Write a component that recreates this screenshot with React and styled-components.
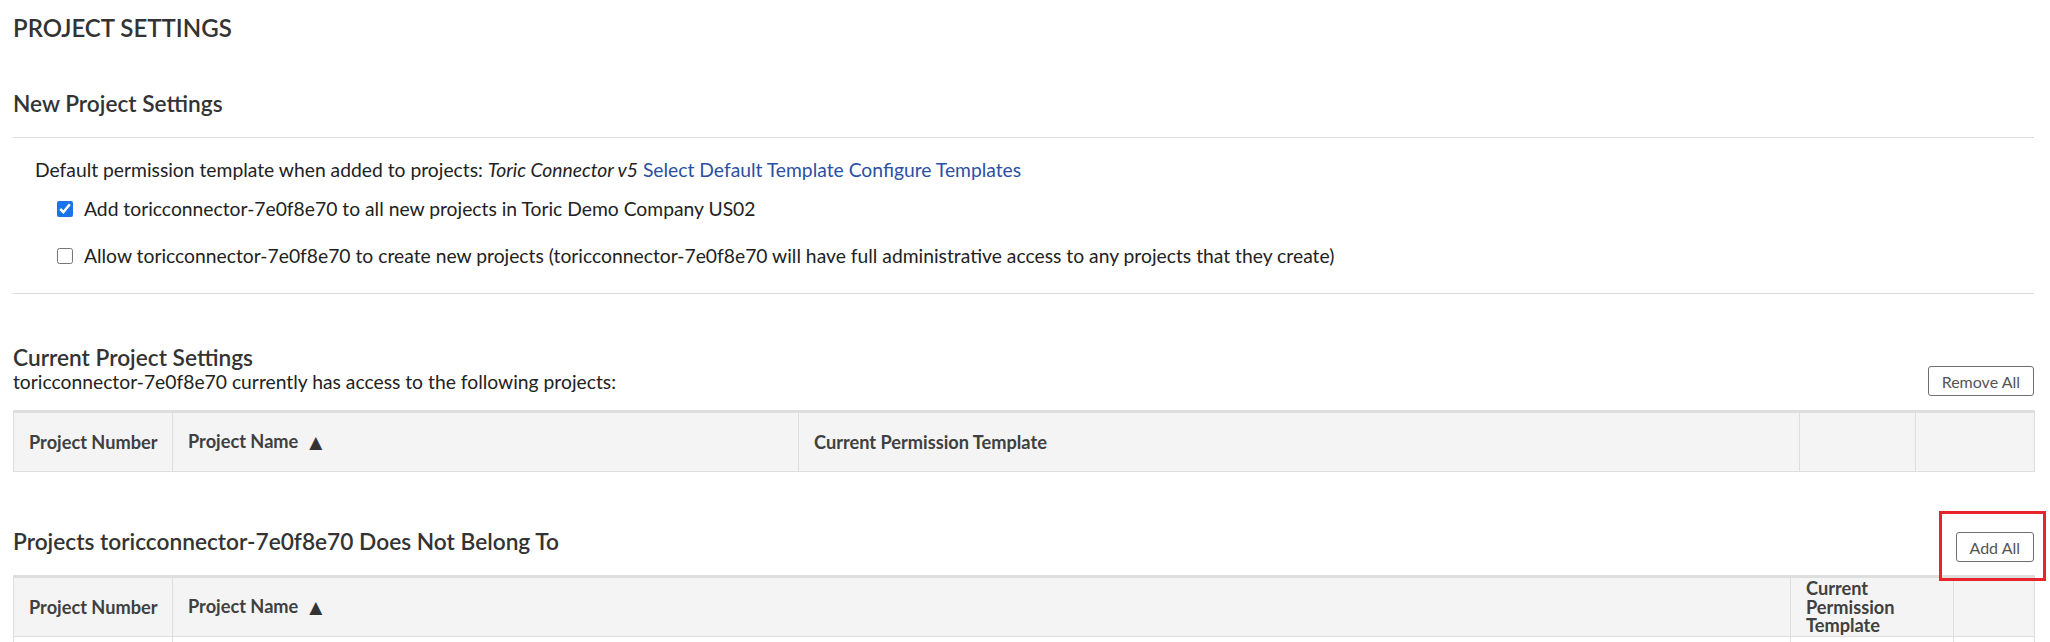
import React from "react";
import styled, { createGlobalStyle } from "styled-components";

const GlobalStyle = createGlobalStyle`
  html, body { margin: 0; padding: 0; background: #fff; }
  body { font-family: Lato, "Open Sans", "Liberation Sans", sans-serif; color: #222; }
  * { box-sizing: border-box; }
`;

const Page = styled.div`
  padding: 0 16px 0 13px;
  width: 2050px;
`;

const PageTitle = styled.h1`
  margin: 0;
  padding-top: 13px;
  font-size: 24px;
  line-height: 29px;
  font-weight: 600;
  color: #333;
`;

const SectionTitle = styled.h2`
  margin: 0;
  font-size: 22.7px;
  line-height: 27px;
  font-weight: 600;
  color: #333;
`;

const NewTitle = styled(SectionTitle)`
  margin-top: 48px;
`;

const Divider = styled.hr`
  border: 0;
  border-top: 1px solid #dcdcdc;
  height: 0;
  margin: ${(p) => p.$top}px 0 0;
`;

const Body = styled.div`
  padding: 20px 0 0 22px;
  font-size: 19.3px;
  line-height: 24px;
`;

const Italic = styled.em`
  font-style: italic;
`;

const Link = styled.a`
  color: #2b4fa3;
  text-decoration: none;
  cursor: pointer;
`;

const CheckRow = styled.label`
  display: flex;
  align-items: center;
  gap: 11px;
  padding-left: 44px;
  margin-top: ${(p) => p.$top}px;
  font-size: 19.3px;
  line-height: 24px;
  color: #222;
`;

const Check = styled.input`
  width: 16px;
  height: 16px;
  margin: 0;
  flex: none;
  accent-color: #1a73e8;
`;

const HeaderRow = styled.div`
  display: flex;
  justify-content: space-between;
  align-items: flex-start;
  margin-top: ${(p) => p.$top}px;
`;

const SubText = styled.div`
  font-size: 19.3px;
  line-height: 22px;
  color: #222;
`;

const Button = styled.button`
  font-family: inherit;
  font-size: 16px;
  color: #555;
  background: #fff;
  border: 1px solid #6f6f6f;
  border-radius: 3px;
  height: 30px;
  padding: 0 13px;
  cursor: pointer;
`;

const ButtonSlot = styled.div`
  position: relative;
  margin-top: ${(p) => p.$top}px;
`;

const Highlight = styled(ButtonSlot)`
  &::after {
    content: "";
    position: absolute;
    top: -21px;
    bottom: -19px;
    left: -17px;
    right: -12px;
    border: 3px solid #e8232b;
    pointer-events: none;
  }
`;

const Table = styled.table`
  width: 100%;
  border-collapse: collapse;
  table-layout: fixed;
  margin-top: ${(p) => p.$top}px;
  border-top: 3px solid #dedede;
`;

const Th = styled.th`
  background: #f4f4f4;
  border: 1px solid #dedede;
  border-top: 0;
  height: 60px;
  padding: 0 8px 0 15px;
  text-align: left;
  vertical-align: middle;
  font-size: 18.2px;
  line-height: 18.5px;
  font-weight: 700;
  color: #404040;
`;

const Td = styled.td`
  border: 1px solid #dedede;
  height: 40px;
  padding: 0 15px;
`;

const Arrow = styled.span`
  font-family: "DejaVu Sans", sans-serif;
  font-size: 17px;
  margin-left: 11px;
  color: #333;
`;

const table1Cols = [159, 626, 1001, 116, 119];
const table2Cols = [159, 1618, 163, 81];

export default function App() {
  return (
    <>
      <GlobalStyle />
      <Page>
        <PageTitle>PROJECT SETTINGS</PageTitle>
        <NewTitle>New Project Settings</NewTitle>
        <Divider $top={20} />
        <Body>
          Default permission template when added to projects:{" "}
          <Italic>Toric Connector v5</Italic> <Link>Select Default Template</Link>{" "}
          <Link>Configure Templates</Link>
        </Body>
        <CheckRow $top={15}>
          <Check type="checkbox" defaultChecked />
          Add toricconnector-7e0f8e70 to all new projects in Toric Demo Company US02
        </CheckRow>
        <CheckRow $top={23}>
          <Check type="checkbox" />
          Allow toricconnector-7e0f8e70 to create new projects (toricconnector-7e0f8e70 will
          have full administrative access to any projects that they create)
        </CheckRow>
        <Divider $top={25} />

        <HeaderRow $top={50}>
          <div>
            <SectionTitle>Current Project Settings</SectionTitle>
            <SubText>toricconnector-7e0f8e70 currently has access to the following projects:</SubText>
          </div>
          <ButtonSlot $top={22}>
            <Button>Remove All</Button>
          </ButtonSlot>
        </HeaderRow>
        <Table $top={14}>
          <colgroup>
            {table1Cols.map((w, i) => (
              <col key={i} style={{ width: w }} />
            ))}
          </colgroup>
          <thead>
            <tr>
              <Th>Project Number</Th>
              <Th>
                Project Name<Arrow>▲</Arrow>
              </Th>
              <Th>Current Permission Template</Th>
              <Th />
              <Th />
            </tr>
          </thead>
        </Table>

        <HeaderRow $top={56}>
          <SectionTitle>Projects toricconnector-7e0f8e70 Does Not Belong To</SectionTitle>
          <Highlight $top={4}>
            <Button>Add All</Button>
          </Highlight>
        </HeaderRow>
        <Table $top={13}>
          <colgroup>
            {table2Cols.map((w, i) => (
              <col key={i} style={{ width: w }} />
            ))}
          </colgroup>
          <thead>
            <tr>
              <Th>Project Number</Th>
              <Th>
                Project Name<Arrow>▲</Arrow>
              </Th>
              <Th>Current Permission Template</Th>
              <Th />
            </tr>
          </thead>
          <tbody>
            <tr>
              <Td />
              <Td />
              <Td />
              <Td />
            </tr>
          </tbody>
        </Table>
      </Page>
    </>
  );
}
